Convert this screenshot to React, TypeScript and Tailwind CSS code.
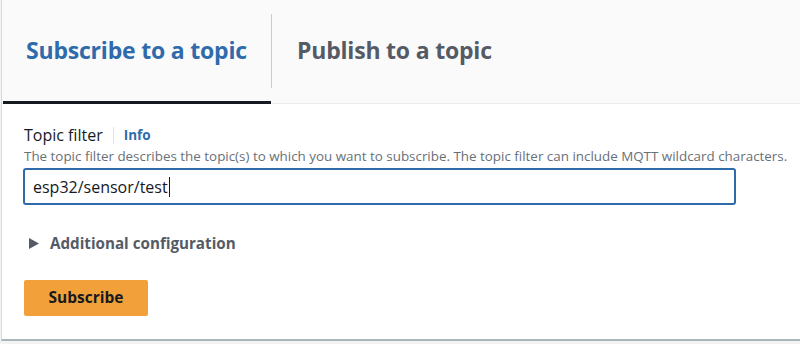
export default function App() {
  return (
    <div className="w-[800px] h-[344px] bg-[#f2f3f3] overflow-hidden font-['Open_Sans',sans-serif]">
      <div className="ml-px h-[341px] bg-white border-l border-b-2 border-l-[#d5dbdb] border-b-[#aab7b8] flex flex-col">
        {/* tabs */}
        <div className="h-[104px] bg-[#fafafa] border-b border-[#eaeded] flex pl-px">
          <div className="relative w-[268px] flex items-center pl-[23px] pb-[2px]">
            <span className="text-[23px] font-bold text-[#2f6bab] tracking-[-0.2px]">Subscribe to a topic</span>
            <div className="absolute left-0 right-0 -bottom-px h-[3px] bg-[#16191f]" />
          </div>
          <div className="mt-[14px] h-[74px] w-px bg-[#c8cccc]" />
          <div className="flex items-center pl-[25px] pb-[2px]">
            <span className="text-[23px] font-bold text-[#545b64] tracking-[-0.2px]">Publish to a topic</span>
          </div>
        </div>

        {/* form */}
        <div className="pl-[21px] pt-[21px]">
          <div className="flex items-center h-[20px] pl-px">
            <span className="text-[16px] text-[#16191f]">Topic filter</span>
            <span className="mx-[10px] h-[17px] w-px bg-[#e2e5e5]" />
            <span className="text-[13.5px] font-bold text-[#2f6bab]">Info</span>
          </div>
          <p className="mt-[2px] pl-px text-[13.4px] leading-[18px] text-[#687078] whitespace-nowrap">
            The topic filter describes the topic(s) to which you want to subscribe. The topic filter can include MQTT wildcard characters.
          </p>
          <div className="mt-[3px] w-[713px] h-[37px] border-2 border-[#2f6bab] rounded-[3px] flex items-center pl-[8px]">
            <span className="text-[16px] text-[#16191f]">esp32/sensor/test</span>
            <span className="ml-px w-px h-[20px] bg-[#16191f]" />
          </div>

          <div className="mt-[28px] flex items-center h-[20px] pl-[6px]">
            <svg width="10" height="11" viewBox="0 0 10 11" className="mr-[11px]">
              <path d="M0 0 L10 5.5 L0 11 Z" fill="#545b64" />
            </svg>
            <span className="text-[15.2px] font-bold text-[#545b64]">Additional configuration</span>
          </div>

          <button className="mt-[27px] ml-px w-[124px] h-[36px] bg-[#f2a13a] rounded-[2px] text-[15.5px] font-bold text-[#16191f]">
            Subscribe
          </button>
        </div>
      </div>
    </div>
  );
}
